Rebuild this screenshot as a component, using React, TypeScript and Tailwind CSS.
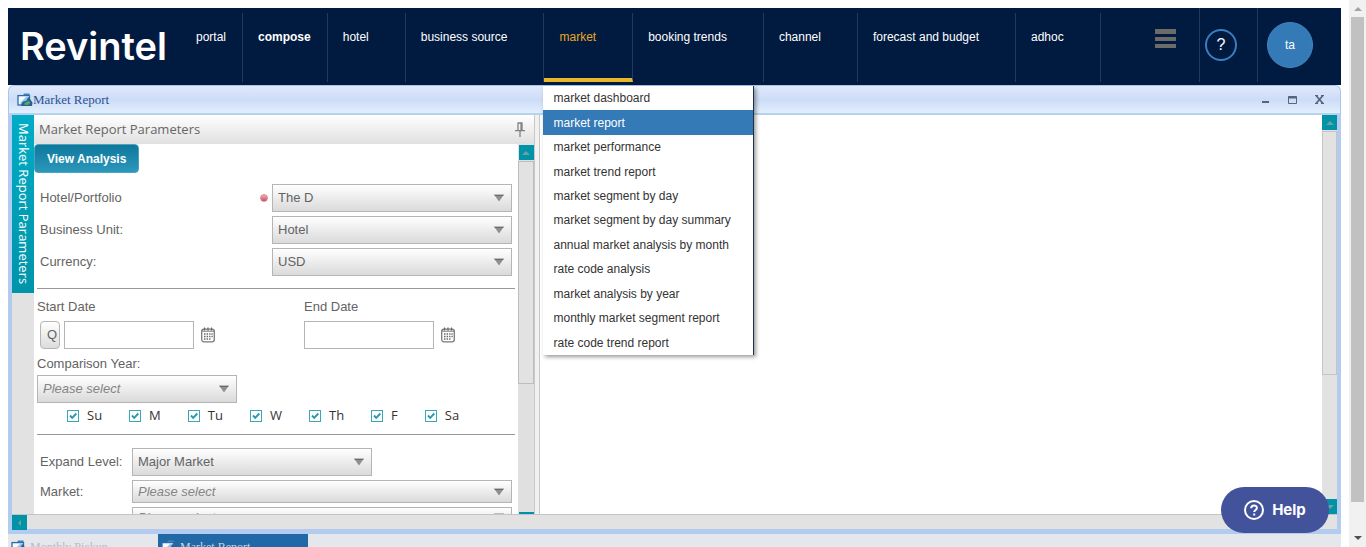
import React from "react";

const sans = "font-['Liberation_Sans',Arial,sans-serif]";
const serif = "font-['Liberation_Serif','Times_New_Roman',serif]";
const humanist = "font-['Open_Sans','Noto_Sans',sans-serif]";

const marketMenu = [
  "market dashboard",
  "market report",
  "market performance",
  "market trend report",
  "market segment by day",
  "market segment by day summary",
  "annual market analysis by month",
  "rate code analysis",
  "market analysis by year",
  "monthly market segment report",
  "rate code trend report",
];

const navItems = [
  { label: "portal", tight: true },
  { label: "compose", tight: true, bold: true },
  { label: "hotel" },
  { label: "business source" },
  { label: "market", active: true },
  { label: "booking trends" },
  { label: "channel" },
  { label: "forecast and budget" },
  { label: "adhoc" },
];

function ReportIcon() {
  return (
    <svg width="16" height="14" viewBox="0 0 16 14" className="shrink-0" aria-hidden="true">
      <path d="M1 2.500h5l1-2h5.500v3H1z" fill="#3c86c4" />
      <rect x="1" y="2.600" width="11.500" height="9.400" fill="#f4fbff" stroke="#2f6ba8" strokeWidth="1.300" />
      <path d="M2.500 10.500 9.500 3.500h2v7z" fill="#8fc6ee" />
      <path d="M4 12.800c.3-3.200 2-4.800 5-4.800L11.500 4l4 5.500-.5 3.500H5z" fill="#2a5f8f" />
      <path d="M7 11.500c.5-2 1.800-2.800 3.500-2.800V7l3 2.700-2.500 2.300z" fill="#5aa763" />
    </svg>
  );
}

function CalendarIcon() {
  return (
    <svg width="14" height="16" viewBox="0 0 14 16" aria-hidden="true">
      <rect x=".7" y="2.200" width="12.600" height="12.600" rx="2.200" fill="#fff" stroke="#7a7a7a" strokeWidth="1.300" />
      <path d="M1 4.200h12" stroke="#8a8a8a" strokeWidth="1.200" />
      <path d="M3.500.5v3M7 .5v3M10.500.5v3" stroke="#666" strokeWidth="1.200" />
      <path d="M3 7h1.500M5.600 7h1.500M8.200 7h1.300M10.400 7h1.300M3 9.500h1.500M5.600 9.500h1.500M8.200 9.500h1.300M10.400 9.500h1.300M3 12h1.500M5.600 12h1.500M8.200 12h1.300" stroke="#666" strokeWidth="1.600" />
    </svg>
  );
}

function Arrow({ dir = "up", className = "fill-[#6f9ea3]" }: { dir?: "up" | "down" | "left"; className?: string }) {
  const d = dir === "up" ? "M0 4 4 0l4 4z" : dir === "down" ? "M0 0h8L4 4z" : "M5 0v6L2 3z";
  return (
    <svg width="8" height={dir === "left" ? 6 : 4} viewBox={dir === "left" ? "0 0 8 6" : "0 0 8 4"} className={className} aria-hidden="true">
      <path d={d} />
    </svg>
  );
}

function Picker({
  id,
  value,
  className,
  placeholder = false,
  label,
}: {
  id: string;
  value: string;
  className: string;
  placeholder?: boolean;
  label?: string;
}) {
  return (
    <div className={`relative shrink-0 ${className}`}>
      <select
        id={id}
        aria-label={label}
        className={`block h-full w-full appearance-none border border-[#b5b5b5] bg-linear-to-b from-white to-[#dadada] pl-[5px] text-[13px] outline-none ${
          placeholder ? "italic text-[#858585]" : "text-[#636363]"
        }`}
      >
        <option>{value}</option>
      </select>
      <svg width="10" height="7" viewBox="0 0 10 7" className="pointer-events-none absolute top-1/2 right-2 -translate-y-1/2" aria-hidden="true">
        <path d="M0 0h10L5 7z" fill="#8f8f8f" />
        <path d="M0 0h10L9 1.500H1z" fill="#6a6a6a" />
      </svg>
    </div>
  );
}

function DateField({ id, label }: { id: string; label: string }) {
  return (
    <>
      <input id={id} type="text" aria-label={label} className="h-7 w-[130px] border border-[#b5b5b5] bg-white px-1 text-[13px] outline-none" />
      <button type="button" aria-label={`Pick ${label}`} className="ml-[7px]">
        <CalendarIcon />
      </button>
    </>
  );
}

function Header() {
  return (
    <header className="flex h-[77px] shrink-0 bg-[#011a40] text-xs text-white">
      <div className="w-[173px] shrink-0 pt-[13px] pl-3 font-['Inter',sans-serif] text-[38px] leading-[50px] font-semibold">Revintel</div>
      <nav className="pt-[5px]">
        <ul className="flex h-[69px]">
          {navItems.map((item) => (
            <li
              key={item.label}
              className={`relative border-r border-[#1f3a63] pt-4 pl-[15px] whitespace-nowrap ${item.tight ? "pr-4" : "pr-9"} ${
                item.active ? "border-b-4 border-b-[#e8b62a]" : ""
              }`}
            >
              <a href="#" className={`leading-4 ${item.bold ? "font-bold" : ""} ${item.active ? "text-[#e8a81f]" : ""}`}>
                {item.label}
              </a>
              {item.active && (
                <ul className="absolute top-[73px] -left-px z-20 flex h-[269px] w-[211px] flex-col border-r border-[#1c2f4a] bg-white text-[#333] shadow-[2px_2px_4px_rgba(0,0,0,0.4)]">
                  {marketMenu.map((entry) => (
                    <li key={entry} className={`flex flex-1 items-center pl-[10px] ${entry === "market report" ? "bg-[#337ab7] text-white" : ""}`}>
                      <a href="#">{entry}</a>
                    </li>
                  ))}
                </ul>
              )}
            </li>
          ))}
        </ul>
      </nav>
      <div className="ml-auto flex">
        <button type="button" aria-label="Menu" className="mt-[21px] mr-[23px] flex h-[19px] w-[21px] flex-col justify-between">
          <span className="h-[5px] w-full bg-[#6b6c69]" />
          <span className="h-1 w-full bg-[#6b6c69]" />
          <span className="h-1 w-full bg-[#6b6c69]" />
        </button>
        <div className="h-[74px] w-[58px] border-l border-[#1f3a63] pt-[21px] pl-[5px]">
          <button type="button" className="flex size-8 items-center justify-center rounded-full border-2 border-[#3a7ebf] text-base">
            ?
          </button>
        </div>
        <div className="h-[74px] w-[84px] border-l border-[#1f3a63] pt-[14px] pl-[9px]">
          <button type="button" className="flex size-[46px] items-center justify-center rounded-full border border-[#4186c6] bg-[#337ab7] text-xs">
            ta
          </button>
        </div>
      </div>
    </header>
  );
}

function TitleBar() {
  return (
    <div className="flex h-[30px] shrink-0 items-center rounded-t-md border border-[#a9c5ec] border-b-2 border-b-[#b5d4ec] bg-linear-to-b from-[#dfe9fb] via-[#cddcf7] to-[#e2effe] pr-4 pl-2">
      <ReportIcon />
      <h1 className={`${serif} text-[13px] text-[#2b5391]`}>Market Report</h1>
      <div className="ml-auto flex items-center gap-[18px] text-[#566579]">
        <button type="button" aria-label="Minimize">
          <svg width="9" height="9" viewBox="0 0 9 9"><path d="M1 7h7" stroke="currentColor" strokeWidth="2" /></svg>
        </button>
        <button type="button" aria-label="Maximize">
          <svg width="9" height="8" viewBox="0 0 9 8"><path d="M.5.5h8v7h-8z" fill="none" stroke="currentColor" /><path d="M0 1.500h9" stroke="currentColor" strokeWidth="2" /></svg>
        </button>
        <button type="button" aria-label="Close">
          <svg width="9" height="9" viewBox="0 0 9 9"><path d="M1 .5 8 8.500M8 .5 1 8.500" stroke="currentColor" strokeWidth="1.700" /><path d="M0 .5h3M6 .5h3M0 8.500h3M6 8.500h3" stroke="currentColor" /></svg>
        </button>
      </div>
    </div>
  );
}

function DayPicker() {
  return (
    <div className={`mt-[5px] flex h-[15px] items-center gap-[27px] pl-[33px] text-[13px] text-[#333] ${humanist}`}>
      {["Su", "M", "Tu", "W", "Th", "F", "Sa"].map((day) => (
        <label key={day} className="flex items-center gap-2 leading-[15px]">
          <span className="relative size-3">
            <input type="checkbox" defaultChecked className="block size-3 appearance-none border border-[#3aa6b8] bg-white" />
            <svg width="12" height="12" viewBox="0 0 12 12" className="pointer-events-none absolute inset-0" aria-hidden="true">
              <path d="m3 5.500 2.200 2.300L9.300 3.500" fill="none" stroke="#2a97ab" strokeWidth="1.900" />
            </svg>
          </span>
          {day}
        </label>
      ))}
    </div>
  );
}

function ParameterForm() {
  return (
    <form className="min-w-0 flex-1 overflow-hidden pr-[3px] text-[13px] text-[#636363]" onSubmit={(e) => e.preventDefault()}>
      <button type="button" className="block h-[29px] rounded-sm border border-[#4ba3bd] bg-linear-to-b from-[#0d789c] to-[#2b98bc] px-3 text-xs font-bold text-white">
        View Analysis
      </button>
      <div className="mt-[11px] flex flex-col gap-1 pr-[3px] pl-[6px]">
        {[
          ["hotel", "Hotel/Portfolio", "The D"],
          ["unit", "Business Unit:", "Hotel"],
          ["currency", "Currency:", "USD"],
        ].map(([id, label, value]) => (
          <div key={id} className="flex items-center">
            <label htmlFor={id} className="flex-1">
              {label}
            </label>
            {id === "hotel" && <span className="mr-1 size-2 rounded-full border border-[#d58a98] bg-linear-to-b from-[#f3aeb8] to-[#cf4560]" />}
            <Picker id={id} value={value} className="h-7 w-60" />
          </div>
        ))}
      </div>
      <hr className="mt-3 ml-[3px] border-[#999]" />
      <div className="mt-2 flex pl-[3px] leading-5">
        <label htmlFor="start" className="w-[267px]">Start Date</label>
        <label htmlFor="end">End Date</label>
      </div>
      <div className="mt-1 flex items-center pl-[6px]">
        <button type="button" className="mr-1 h-7 w-5 rounded border border-[#b5b5b5] bg-linear-to-b from-white to-[#dcdcdc] pl-1">
          Q
        </button>
        <DateField id="start" label="start date" />
        <span className="w-[89px]" />
        <DateField id="end" label="end date" />
      </div>
      <div className="mt-1 pl-[3px]">
        <label htmlFor="year" className="block leading-[22px]">Comparison Year:</label>
        <Picker id="year" value="Please select" placeholder className="h-7 w-[200px]" />
      </div>
      <DayPicker />
      <hr className="mt-[11px] ml-[3px] border-[#999]" />
      <div className="mt-[13px] flex flex-col gap-1 pr-[3px] pl-[6px]">
        <div className="flex items-center">
          <label htmlFor="level" className="w-[92px]">Expand Level:</label>
          <Picker id="level" value="Major Market" className="h-7 w-60" />
        </div>
        <div className="flex items-center">
          <label htmlFor="market" className="w-[92px]">Market:</label>
          <Picker id="market" value="Please select" placeholder className="h-[23px] w-[380px]" />
        </div>
        <div className="flex items-center pl-[92px]">
          <Picker id="segment" label="Market segment" value="Please select" placeholder className="h-5 w-[380px]" />
        </div>
      </div>
    </form>
  );
}

function ScrollEnd({ dir }: { dir: "up" | "down" | "left" }) {
  return (
    <div className="flex size-[15px] shrink-0 items-center justify-center bg-[#0093a8]">
      <Arrow dir={dir} />
    </div>
  );
}

export default function App() {
  return (
    <div className={`flex h-screen overflow-hidden bg-white ${sans}`}>
      <div className="flex min-w-0 flex-1 flex-col pt-2 pr-2 pl-2">
        <Header />
        <main className="flex min-h-0 flex-1 flex-col">
          <TitleBar />
          <div className="flex min-h-0 flex-1 flex-col border-x-4 border-b-[5px] border-[#b3cbee]">
            <div className="flex min-h-0 flex-1">
              <div className="w-[22px] shrink-0 bg-[#e2e2e2]">
                <button type="button" className={`flex h-[178px] w-full items-center justify-center bg-linear-to-b from-[#00acc6] to-[#0094a9] text-[13px] text-white [writing-mode:vertical-rl] ${humanist}`}>
                  Market Report Parameters
                </button>
              </div>
              <section className="flex w-[500px] shrink-0 flex-col">
                <div className={`flex h-[29px] shrink-0 items-center justify-between bg-linear-to-b from-white to-[#e0e0e0] pr-2 pl-[5px] text-[13px] text-[#666] ${humanist}`}>
                  <h2>Market Report Parameters</h2>
                  <button type="button" aria-label="Pin panel">
                    <svg width="12" height="16" viewBox="0 0 12 16" fill="none" stroke="#808080" strokeWidth="1.300">
                      <path d="M3.500 1h5M4 1v7.500M8 1v7.500M1 8.700h10M6 9v6" />
                      <path d="M7.200 1v7" strokeWidth="1.600" />
                    </svg>
                  </button>
                </div>
                <div className="flex min-h-0 flex-1">
                  <ParameterForm />
                  <div className="flex w-4 shrink-0 flex-col items-center overflow-hidden bg-[#e0e0e0] pt-px">
                    <ScrollEnd dir="up" />
                    <div className="mt-px h-[223px] w-full shrink-0 border border-[#bdbdbd] bg-[#e2e2e2]" />
                    <div className="mt-auto h-0.5 w-[15px] bg-[#0093a8]" />
                  </div>
                </div>
              </section>
              <div className="w-[6px] shrink-0 border-x border-[#c8c8c8] bg-[#f1f1f1]" />
              <section aria-label="Report" className="min-w-0 flex-1 bg-white" />
              <div className="flex w-[15px] shrink-0 flex-col bg-[#e2e2e2]">
                <ScrollEnd dir="up" />
                <div className="mt-px h-[244px] border border-[#c4c4c4] bg-[#e2e2e2]" />
                <div className="mt-auto">
                  <ScrollEnd dir="down" />
                </div>
              </div>
            </div>
            <div className="flex h-[15px] shrink-0 border-t border-[#c4c4c4] bg-[#e2e2e2]">
              <ScrollEnd dir="left" />
            </div>
          </div>
        </main>
        <footer className={`flex h-[13px] shrink-0 items-start overflow-hidden bg-[#e4e7eb] text-xs ${serif}`}>
          <button type="button" className="flex h-[25px] w-[150px] items-center gap-[3px] pl-[3px] text-[#b3bdc9]">
            <ReportIcon />
            Monthly Pickup
          </button>
          <button type="button" className="flex h-[25px] w-[150px] items-center gap-[3px] bg-[#2068a6] pl-[3px] text-[#c4d9ec]">
            <ReportIcon />
            Market Report
          </button>
        </footer>
      </div>
      <div className="flex w-[17px] shrink-0 flex-col items-center bg-[#f1f1f1]">
        <div className="flex h-[17px] items-center">
          <Arrow dir="up" className="fill-[#a3a3a3]" />
        </div>
        <div className="w-[13px] flex-1 bg-[#c1c1c1]" />
        <div className="flex h-[45px] items-end pb-[7px]">
          <Arrow dir="down" className="fill-[#505050]" />
        </div>
      </div>
      <button type="button" className="fixed right-[37px] bottom-[14px] z-30 flex h-[46px] w-[108px] items-center justify-center gap-2 rounded-full bg-[#43539b] font-['Inter',sans-serif] text-[15px] font-bold text-white">
        <svg width="20" height="20" viewBox="0 0 20 20" fill="none" stroke="#fff" strokeWidth="2" aria-hidden="true">
          <circle cx="10" cy="10" r="9" />
          <path d="M7.200 8.200c0-3.800 5.700-3.600 5.700-.3 0 2-2.700 2.200-2.700 4.200M10.200 13.400v2" />
        </svg>
        Help
      </button>
    </div>
  );
}
